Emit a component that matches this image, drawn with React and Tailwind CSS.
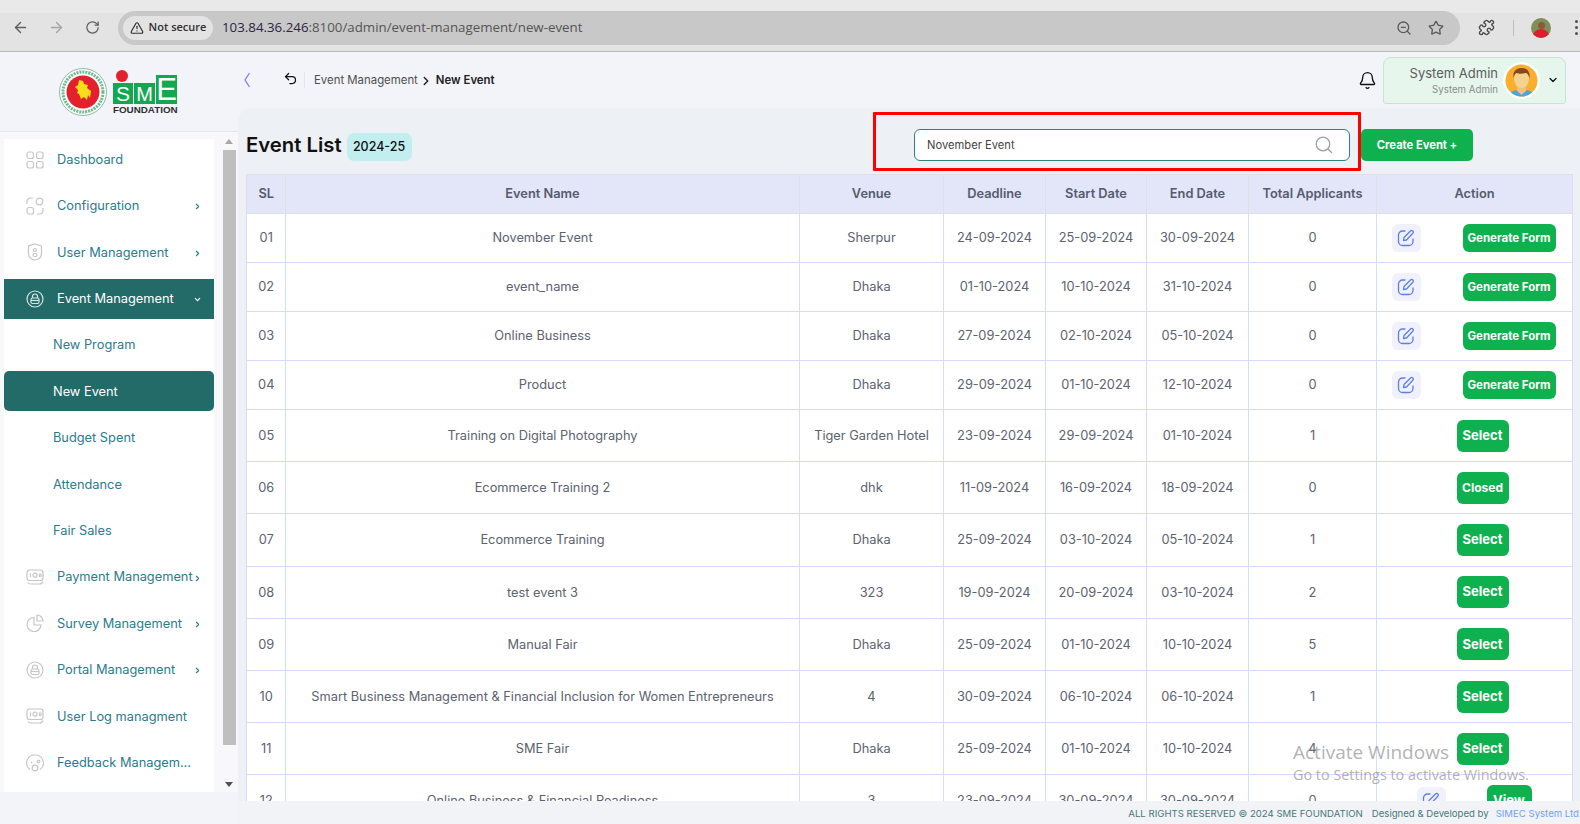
import React from "react";
import { ArrowLeft, ArrowRight, RotateCw, TriangleAlert, ZoomOut, Star, Puzzle, Undo2, Bell, ChevronRight, ChevronDown } from "lucide-react";

const G = { width: 18, height: 18, viewBox: "0 0 18 18", fill: "none", stroke: "#c6c6c6", strokeWidth: 1.2 };
const IconGrid = () => (
  <svg {...G}><rect x="1" y="1" width="6.5" height="6.5" rx="2" /><rect x="10.5" y="1" width="6.5" height="6.5" rx="2" /><rect x="1" y="10.5" width="6.5" height="6.5" rx="2" /><rect x="10.5" y="10.5" width="6.5" height="6.5" rx="2" /></svg>
);
const IconConfig = () => (
  <svg {...G}><path d="M1 7V4.5A3.5 3.5 0 0 1 4.5 1H7" /><circle cx="13.5" cy="4.5" r="3.3" /><rect x="1" y="10.5" width="6.5" height="6.5" rx="2" /><path d="M17 11v2.5a3.5 3.5 0 0 1-3.5 3.5H11" /></svg>
);
const IconShield = () => (
  <svg {...G}><path d="M9 1l6.5 2v7c0 4-3 6.5-6.5 7-3.500-.5-6.500-3-6.500-7V3z" /><circle cx="9" cy="7" r="1.500" /><rect x="7" y="10.500" width="4" height="3" rx="1.500" /></svg>
);
const IconLock = ({ c = "#c6c6c6" }) => (
  <svg {...G} stroke={c}><circle cx="9" cy="9" r="8" /><rect x="5" y="8" width="8" height="5.500" rx="1.500" /><path d="M6.500 8V6.500a2.500 2.500 0 0 1 5 0V8" /><path d="M5 10.500h8" /></svg>
);
const IconMoney = () => (
  <svg {...G}><rect x="1" y="2" width="16" height="10.500" rx="2.500" /><path d="M2 14.500c.5 1 1.500 1.500 2.500 1.500h9c1.500 0 3-1 3.500-2.500" /><circle cx="9" cy="7.200" r="2" /><path d="M4.500 5.500v3.500M13.500 5.500v3.500M15 5.500v3.500" /></svg>
);
const IconPie = () => (
  <svg {...G}><path d="M8 3.500A7 7 0 1 0 15 11H8z" /><path d="M11 1a6 6 0 0 1 6 6h-6z" /></svg>
);
const IconFeedback = () => (
  <svg {...G}><path d="M4 15.500A8 8 0 0 1 9 1a8 8 0 0 1 5 14.500" /><circle cx="9" cy="14" r="2.800" /><circle cx="12.500" cy="7.500" r="1.300" /><path d="M5 9l1-1" /></svg>
);

const Chev = ({ down, white }) =>
  down ? (
    <ChevronDown size={9} strokeWidth={3} className={white ? "text-white" : "text-[#2b7b8c]"} />
  ) : (
    <ChevronRight size={9} strokeWidth={3} className="text-[#2b7b8c]" />
  );

const menu = [
  { t: "Dashboard", i: <IconGrid /> },
  { t: "Configuration", i: <IconConfig />, c: true },
  { t: "User Management", i: <IconShield />, c: true },
  { t: "Event Management", i: <IconLock c="#d7e4e3" />, c: true, open: true },
  { t: "New Program", sub: true },
  { t: "New Event", sub: true, active: true },
  { t: "Budget Spent", sub: true },
  { t: "Attendance", sub: true },
  { t: "Fair Sales", sub: true },
  { t: "Payment Management", i: <IconMoney />, c: true },
  { t: "Survey Management", i: <IconPie />, c: true },
  { t: "Portal Management", i: <IconLock />, c: true },
  { t: "User Log managment", i: <IconMoney /> },
  { t: "Feedback Managem...", i: <IconFeedback /> },
];

const rows = [
  ["01", "November Event", "Sherpur", "24-09-2024", "25-09-2024", "30-09-2024", "0", "gen"],
  ["02", "event_name", "Dhaka", "01-10-2024", "10-10-2024", "31-10-2024", "0", "gen"],
  ["03", "Online Business", "Dhaka", "27-09-2024", "02-10-2024", "05-10-2024", "0", "gen"],
  ["04", "Product", "Dhaka", "29-09-2024", "01-10-2024", "12-10-2024", "0", "gen"],
  ["05", "Training on Digital Photography", "Tiger Garden Hotel", "23-09-2024", "29-09-2024", "01-10-2024", "1", "Select"],
  ["06", "Ecommerce Training 2", "dhk", "11-09-2024", "16-09-2024", "18-09-2024", "0", "Closed"],
  ["07", "Ecommerce Training", "Dhaka", "25-09-2024", "03-10-2024", "05-10-2024", "1", "Select"],
  ["08", "test event 3", "323", "19-09-2024", "20-09-2024", "03-10-2024", "2", "Select"],
  ["09", "Manual Fair", "Dhaka", "25-09-2024", "01-10-2024", "10-10-2024", "5", "Select"],
  ["10", "Smart Business Management & Financial Inclusion for Women Entrepreneurs", "4", "30-09-2024", "06-10-2024", "06-10-2024", "1", "Select"],
  ["11", "SME Fair", "Dhaka", "25-09-2024", "01-10-2024", "10-10-2024", "4", "Select"],
  ["12", "Online Business & Financial Readiness", "3", "23-09-2024", "30-09-2024", "30-09-2024", "0", "view"],
];
const heads = ["SL", "Event Name", "Venue", "Deadline", "Start Date", "End Date", "Total Applicants", "Action"];
const widths = ["w-[38.5px]", "w-[514px]", "w-[144px]", "w-[102px]", "w-[101px]", "w-[102px]", "w-[128px]", "w-[196px]"];

const EditBtn = () => (
  <div className="w-[29px] h-[28px] rounded-md bg-[#f1f1fd] flex items-center justify-center">
    <svg width="20" height="20" viewBox="0 0 20 20" fill="none" stroke="#5b80e6" strokeWidth="1.300" strokeLinecap="round" strokeLinejoin="round">
      <path d="M9 3H6.500A4 4 0 0 0 2.500 7v6.500a4 4 0 0 0 4 4H13a4 4 0 0 0 4-4V11" />
      <path d="M7.500 12.500l.5-3 6.500-6.500a1.500 1.500 0 0 1 2.300 2.300L10.500 12z" />
    </svg>
  </div>
);
const Action = ({ k }) => {
  if (k === "gen")
    return (
      <div className="flex items-center justify-between pl-[15px] pr-[16px]">
        <EditBtn />
        <div className="w-[93px] h-[28px] rounded-md bg-[#0fb14f] text-white text-[11.500px] font-bold flex items-center justify-center pt-[1px]">Generate Form</div>
      </div>
    );
  if (k === "view")
    return (
      <div className="flex items-center gap-[41px] pl-[40px]">
        <EditBtn />
        <div className="w-[45px] h-[32px] rounded-md bg-[#0fb14f] text-white text-[13px] font-bold flex items-center justify-center">View</div>
      </div>
    );
  return (
    <div className="pl-[80px]">
      <div className={`w-[52px] h-[32px] rounded-md bg-[#0fb14f] text-white font-bold flex items-center justify-center ${k === "Closed" ? "text-[12px]" : "text-[13px]"}`}>{k}</div>
    </div>
  );
};

const Logo = () => (
  <div className="flex items-start gap-[6px]">
    <svg width="48" height="48" viewBox="0 0 48 48" className="mt-[1px]">
      <circle cx="24" cy="24" r="23.500" fill="#fff" stroke="#6bb08a" strokeWidth="0.800" />
      <circle cx="24" cy="24" r="20" fill="none" stroke="#2f9a5c" strokeWidth="3" strokeDasharray="2 1" opacity="0.700" />
      <circle cx="24" cy="24" r="16.500" fill="#e3202b" />
      <path d="M20 12l4 1 1 3 4 1-1 3 4 3-1 7-2-3-1 5-3-3-3 2-2-5-2-1 1-3-3-3 3-2z" fill="#f9dc1c" />
    </svg>
    <div className="flex flex-col relative w-[64px] h-[48px]">
      <div className="absolute left-[3px] top-[3px] w-[12px] h-[12px] rounded-full bg-[#e3202b]" />
      <div className="absolute left-0 top-[8px] w-[64px] flex items-end gap-[1px]">
        <div className="w-[20px] h-[21px] bg-[#13a84f] text-white flex items-center justify-center text-[21px] leading-none font-['Liberation_Sans']">S</div>
        <div className="w-[21px] h-[21px] bg-[#13a84f] text-white flex items-center justify-center text-[20px] leading-none font-['Liberation_Sans']">M</div>
        <div className="w-[21px] h-[29px] bg-[#13a84f] text-white flex items-center justify-center text-[31px] leading-none font-['Liberation_Sans']">E</div>
      </div>
      <div className="absolute left-0 top-[38px] text-[9.800px] leading-[10px] font-bold text-[#2f2f2f] font-['Liberation_Sans'] whitespace-nowrap">FOUNDATION</div>
    </div>
  </div>
);

const Avatar = () => (
  <svg width="37" height="37" viewBox="0 0 37 37">
    <defs><clipPath id="av"><circle cx="18.500" cy="18.500" r="16" /></clipPath></defs>
    <circle cx="18.500" cy="18.500" r="18.500" fill="#fff" />
    <g clipPath="url(#av)">
      <rect width="37" height="37" fill="#fbae2d" />
      <path d="M4 37c1-7 6-9 14.500-9S32 30 33 37z" fill="#47a6dc" />
      <path d="M14 22h9v7l-4.500 4-4.500-4z" fill="#eebf86" />
      <ellipse cx="18.500" cy="17" rx="7.500" ry="9" fill="#f6d28f" />
      <path d="M10.500 16c-1-7 3-10 8-10s9 3 8 10c-1-3-2-5-4-5-3 1-7 1-9 0-2 1-2.500 3-3 5z" fill="#8a4a20" />
    </g>
  </svg>
);

const Tri = ({ up }) => (
  <svg width="8" height="5" viewBox="0 0 8 5" className="shrink-0"><path d={up ? "M4 0l4 5H0z" : "M0 0h8L4 5z"} fill={up ? "#a6a6a6" : "#505050"} /></svg>
);

export default function App() {
  return (
    <div className="w-[1580px] h-[824px] overflow-hidden flex flex-col relative font-['Inter',sans-serif] bg-[#f3f3fa]">
      {/* browser chrome */}
      <div className="h-[52px] shrink-0 bg-[linear-gradient(#e9e9e9_13px,#e3e3e3_13px)] border-b border-[#b8b8b8] flex items-center pl-[12px] pt-[4px] font-['Open_Sans',sans-serif]">
        <div className="flex items-center gap-[19px] text-[#5f5f5f]">
          <ArrowLeft size={17} strokeWidth={2} />
          <ArrowRight size={17} strokeWidth={2} className="text-[#a4a4a4]" />
          <RotateCw size={15} strokeWidth={2} className="ml-[1px]" />
        </div>
        <div className="ml-[18px] w-[1342px] h-[34px] rounded-full bg-[#c8c8c8] flex items-center pl-[5px] pr-[16px]">
          <div className="h-[24px] w-[90px] rounded-full bg-[#e3e3e3] flex items-center justify-center gap-[5px] text-[#303030] text-[11px] font-semibold">
            <TriangleAlert size={14} strokeWidth={2} />
            <span>Not secure</span>
          </div>
          <div className="ml-[9px] text-[13.300px] text-[#555] flex-1"><span className="text-[#2c2440]">103.84.36.246</span>:8100/admin/event-management/new-event</div>
          <ZoomOut size={16} strokeWidth={2} className="text-[#5a5a5a]" />
          <Star size={16} strokeWidth={2} className="text-[#5a5a5a] ml-[16px]" />
        </div>
        <Puzzle size={17} strokeWidth={2} className="text-[#4f4f4f] ml-[18px]" />
        <div className="w-px h-[16px] bg-[#bdbdbd] ml-[18px]" />
        <div className="ml-[17px] w-[20px] h-[20px] rounded-full overflow-hidden bg-[#7f8f5a] flex flex-col items-center justify-end">
          <div className="w-[7px] h-[7px] rounded-full bg-[#8a5a3a]" />
          <div className="w-[18px] h-[9px] rounded-t-full bg-[#dd1f2d]" />
        </div>
        <div className="ml-[24px] flex flex-col gap-[3px]">
          <div className="w-[3px] h-[3px] rounded-full bg-[#4f4f4f]" />
          <div className="w-[3px] h-[3px] rounded-full bg-[#4f4f4f]" />
          <div className="w-[3px] h-[3px] rounded-full bg-[#4f4f4f]" />
        </div>
      </div>

      <div className="flex-1 flex min-h-0">
        {/* sidebar */}
        <aside className="w-[238px] shrink-0 flex flex-col">
          <div className="h-[80px] shrink-0 pl-[59px] pt-[15px] border-b border-[#e6e6ef]"><Logo /></div>
          <div className="h-[660px] shrink-0 flex bg-[#f8f8fb] pl-[4px] pt-[7px]">
            <nav className="w-[210px] h-[653px] bg-white overflow-hidden flex flex-col gap-[6.400px] pt-[0.500px]">
              {menu.map((m) => {
                const dark = m.open || m.active;
                return (
                  <div key={m.t} className={`h-[40px] shrink-0 flex items-center text-[12.800px] ${dark ? "bg-[#226b68] text-white" : "text-[#2b7b8c]"} ${m.active ? "rounded-[5px]" : ""} ${m.sub ? "pl-[49px]" : "pl-[22px]"}`}>
                    {m.i && <span className="w-[18px] mr-[13px] flex items-center">{m.i}</span>}
                    <span className="whitespace-nowrap">{m.t}</span>
                    {m.c && <span className="ml-auto mr-[12px] flex mt-[2px]"><Chev down={m.open} white /></span>}
                  </div>
                );
              })}
            </nav>
            <div className="ml-[6px] w-[18px] h-[660px] -mt-[7px] flex flex-col items-center pt-[7px]">
              <Tri up />
              <div className="w-[13px] h-[595px] bg-[#bfbfbf] mt-[6px] shrink-0" />
              <div className="mt-[37px] flex"><Tri /></div>
            </div>
          </div>
        </aside>

        {/* main */}
        <main className="flex-1 min-w-0 flex flex-col">
          <header className="h-[56px] shrink-0 flex items-center pl-[5px] pr-[14px]">
            <svg width="8" height="18" viewBox="0 0 8 18" fill="none" stroke="#8d7bf0" strokeWidth="1.300"><path d="M6.500 2L2 9l4.500 7" /></svg>
            <Undo2 size={15} strokeWidth={2} className="ml-[32px] -mt-[4px] text-[#111]" />
            <div className="w-px h-[16px] bg-[#e4e4ec] ml-[6px]" />
            <span className="ml-[9px] mt-[1px] text-[11.400px] text-[#4f4f4f]">Event Management</span>
            <ChevronRight size={14} strokeWidth={2.500} className="ml-[1px] mt-[1px] text-[#222]" />
            <span className="ml-[3px] mt-[1px] text-[11.400px] font-semibold text-[#222]">New Event</span>
            <Bell size={19} strokeWidth={1.700} className="ml-auto text-[#111]" />
            <div className="ml-[6px] w-[183px] h-[47px] rounded-t-[8px] rounded-b-[3px] bg-[#e6f6ec] border border-[#bfe8cc] flex items-center pr-[6px]">
              <div className="flex-1 text-right">
                <div className="text-[13px] leading-[17px] text-[#5c5c5c] mt-[1px]">System Admin</div>
                <div className="text-[9.700px] leading-[14px] text-[#8c8c8c] mt-[1px]">System Admin</div>
              </div>
              <div className="ml-[5px]"><Avatar /></div>
              <ChevronDown size={12} strokeWidth={2.500} className="ml-[7px] text-[#111]" />
            </div>
          </header>

          <section className="flex-1 min-h-0 overflow-hidden rounded-tl-[14px] bg-[#edf0f5] pl-[8px] pt-[4px]">
            <div className="h-[59px] flex items-center pr-[107px]">
              <h1 className="text-[20.300px] font-semibold text-[#111] mt-[7px]">Event List</h1>
              <div className="ml-[5px] mt-[11px] w-[65px] h-[28px] rounded-[7px] bg-[#c2eef0] flex items-center justify-center text-[12.500px] font-medium text-[#111]">2024-25</div>
              <div className="ml-auto w-[488px] h-[59px] border-[3px] border-[#ff0000] rounded-[1px] flex items-center justify-end pr-[8px] pt-[7px]">
                <div className="w-[436px] h-[32px] rounded-[6px] border border-[#2f7f78] bg-white flex items-center justify-between pl-[12px] pr-[16px] text-[11.200px] text-[#444]">
                  <span>November Event</span>
                  <svg width="18" height="18" viewBox="0 0 18 18" fill="none" stroke="#9aa1ac" strokeWidth="1.300"><circle cx="8" cy="8" r="6.800" /><path d="M13 13l4 4" /></svg>
                </div>
              </div>
              <div className="mt-[7px] w-[112px] h-[32px] rounded-[5px] bg-[#0fb14f] text-white text-[11.200px] font-bold flex items-center justify-center">Create Event +</div>
            </div>
            <table className="mt-[3px] w-[1326px] table-fixed border-collapse text-[12.800px] text-[#5b6270] bg-white">
              <thead>
                <tr className="h-[39px] bg-[#e3e5f8]">
                  {heads.map((h, i) => (
                    <th key={h} className={`${widths[i]} border border-[#dedfe8] font-semibold text-[#555b6e] p-0 pl-[1px] text-center`}>{h}</th>
                  ))}
                </tr>
              </thead>
              <tbody>
                {rows.map((r, i) => (
                  <tr key={r[0]} className={i < 4 ? "h-[49px]" : "h-[52.200px]"}>
                    {r.slice(0, 7).map((c, j) => (
                      <td key={j} className="border border-[#d6dbff] p-0 pl-[1px] text-center">{c}</td>
                    ))}
                    <td className="border border-[#d6dbff] p-0"><Action k={r[7]} /></td>
                  </tr>
                ))}
              </tbody>
            </table>
          </section>

          <footer className="h-[23px] shrink-0 bg-[#f2f3f6] flex items-center justify-end pr-[1px] pt-[4px] text-[9.600px] text-[#46797a]">
            <span>ALL RIGHTS RESERVED © 2024 SME FOUNDATION</span>
            <span className="ml-[9px]">Designed &amp; Developed by</span>
            <span className="ml-[7px] text-[#6aa5f5]">SIMEC System Ltd</span>
          </footer>
        </main>
      </div>

      {/* Windows activation watermark */}
      <div className="absolute left-[1293px] top-[738px] pointer-events-none font-['Open_Sans',sans-serif] text-[#8f8f8f]/70">
        <div className="text-[19px] leading-[28px]">Activate Windows</div>
        <div className="text-[14.400px] leading-[17px]">Go to Settings to activate Windows.</div>
      </div>
    </div>
  );
}
